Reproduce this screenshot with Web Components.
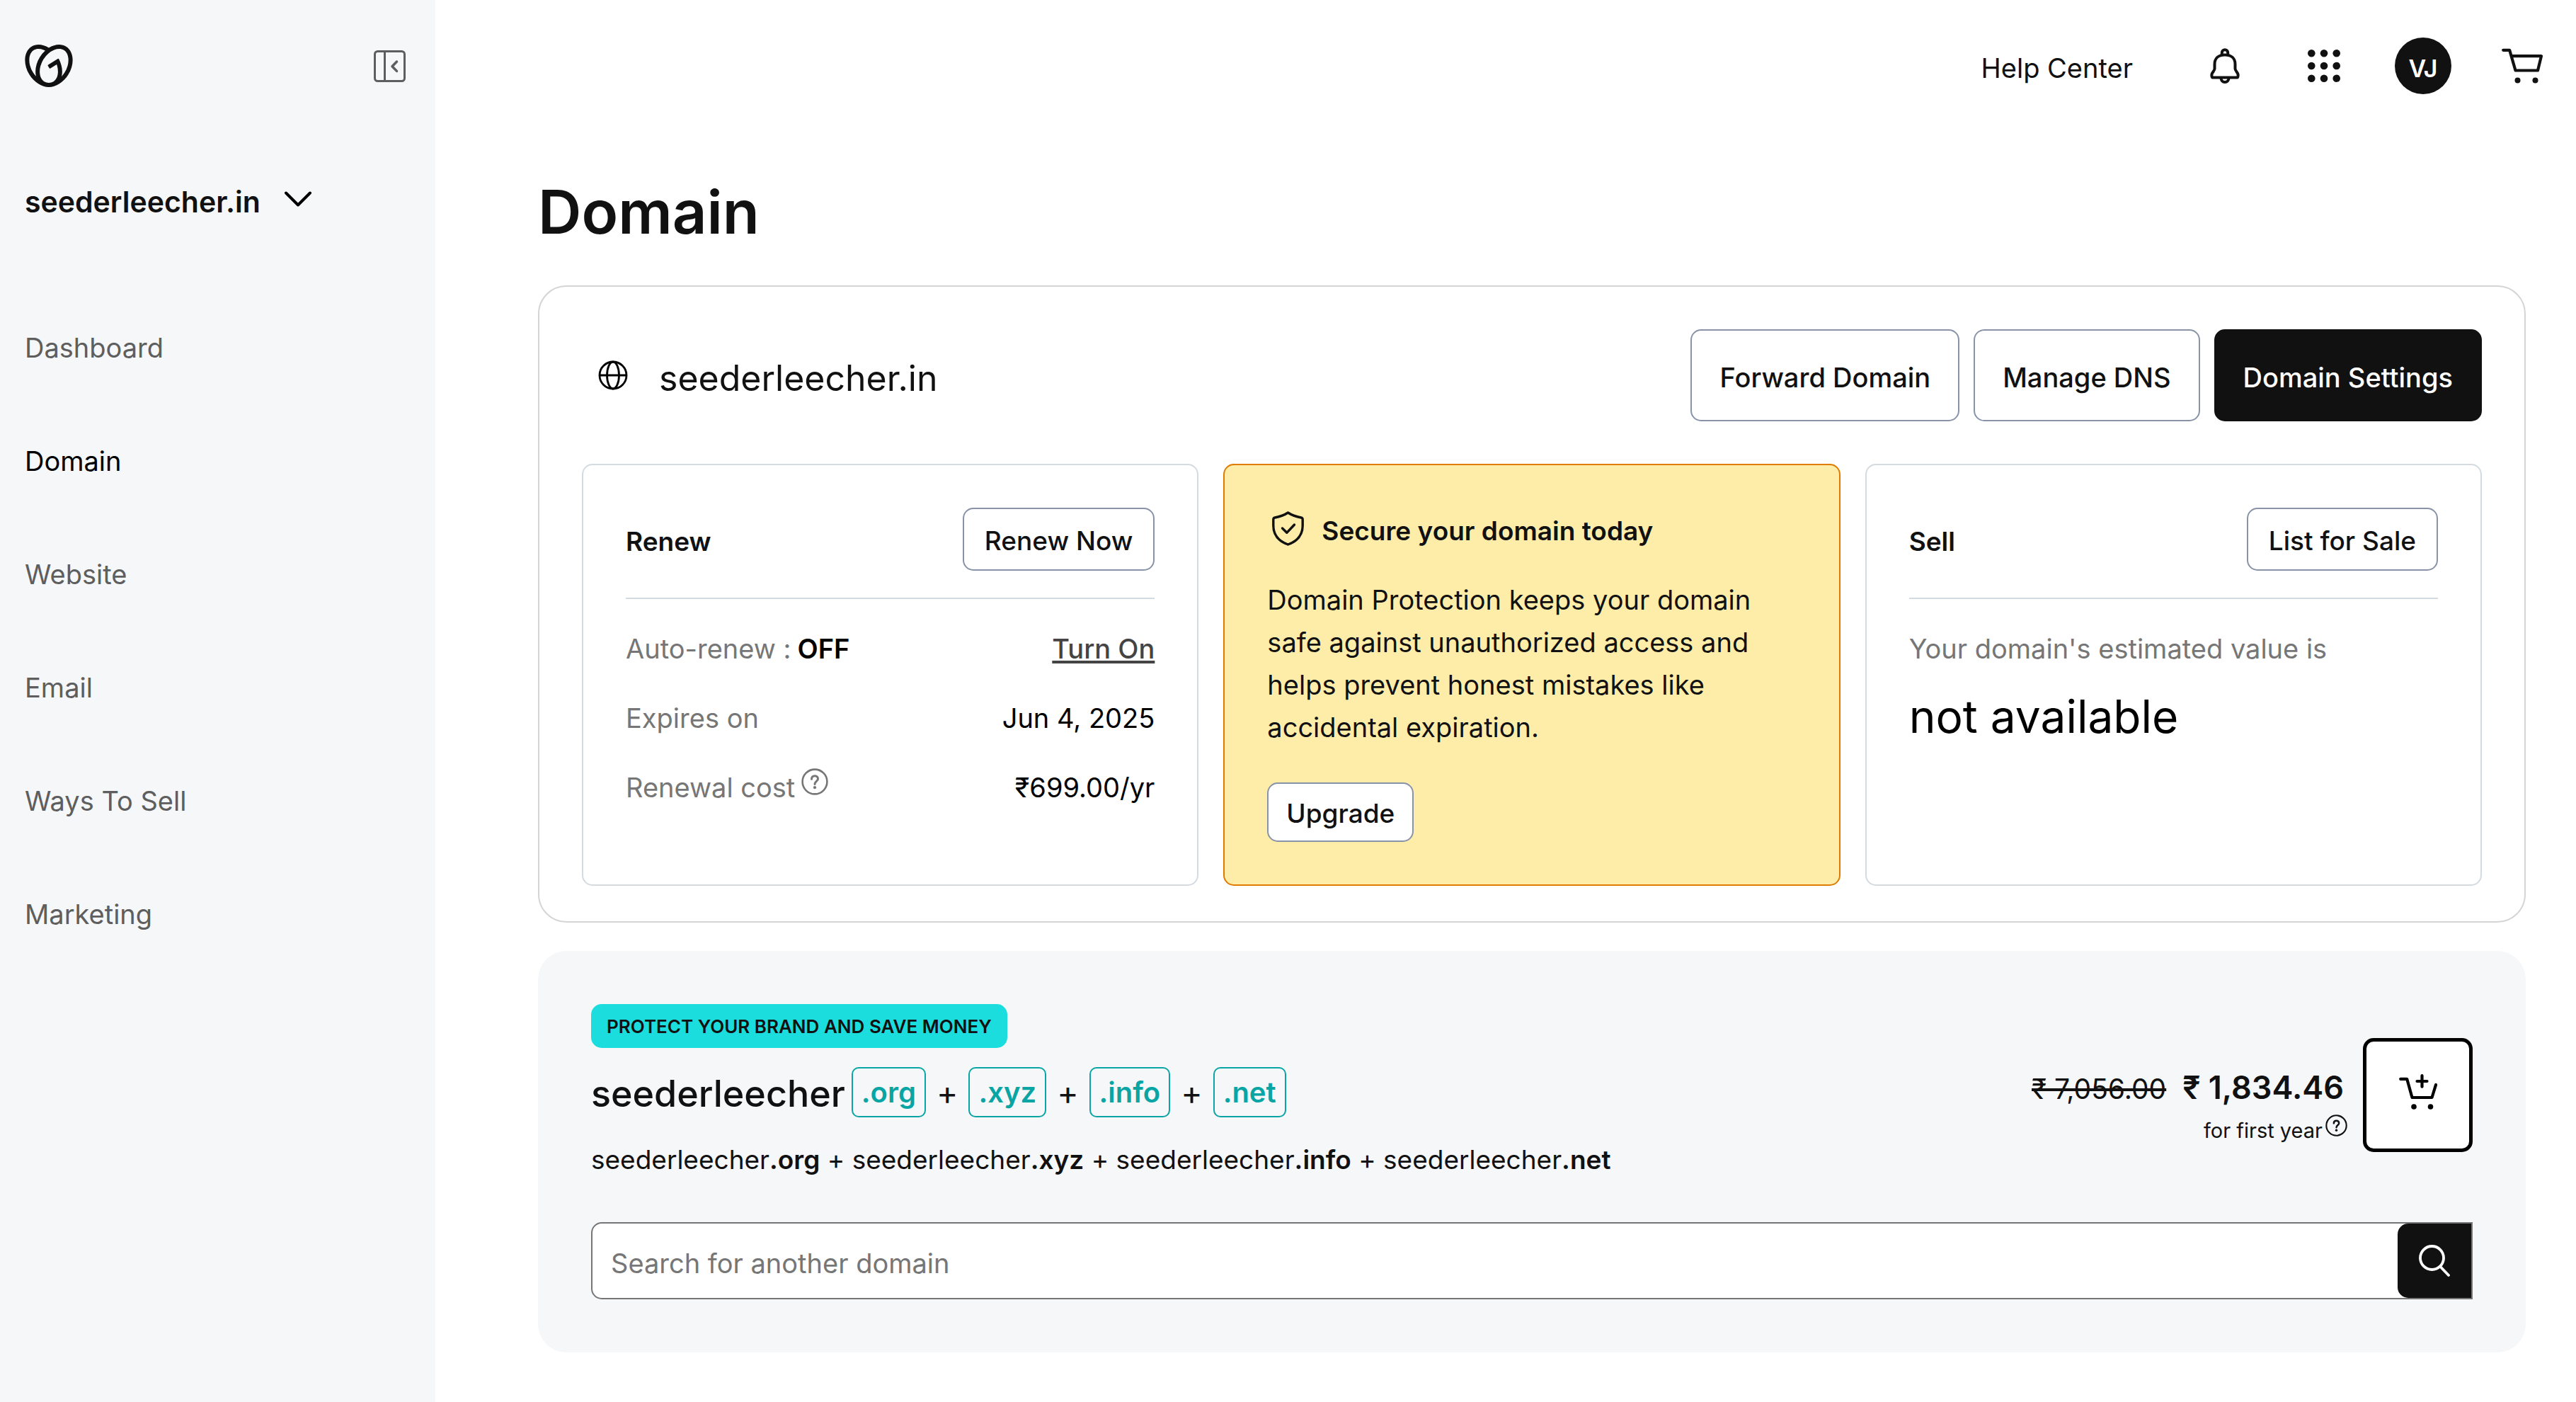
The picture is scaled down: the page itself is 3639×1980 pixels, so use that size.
<!DOCTYPE html>
<html lang="en">
<head>
<meta charset="utf-8">
<meta name="viewport" content="width=device-width, initial-scale=1">
<title>Domain</title>
<style>
  html, body { margin: 0; min-height: 100%; background: #fff; }
  body {
    --ink: #111;
    --muted: #767676;
    --panel: #f5f7f9;
    --line: #d4dbe0;
    --outline: #8893a8;
    --teal: #09a5a5;
    font-family: Inter, "Noto Sans", sans-serif;
    font-size: 38px;
    line-height: 60px;
    color: var(--ink);
  }
</style>
</head>
<body>
<domain-app></domain-app>

<script>
const ICONS = {
  logo: ['0 1.3 24 21.4', '<path fill="currentColor" d="M20.702 2.29c-2.494-1.554-5.778-1.187-8.706.654C9.076 1.104 5.79.736 3.3 2.29c-3.941 2.463-4.42 8.806-1.07 14.167 2.47 3.954 6.333 6.269 9.77 6.226 3.439.043 7.301-2.273 9.771-6.226 3.347-5.361 2.872-11.704-1.069-14.167zM4.042 15.328a12.838 12.838 0 01-1.546-3.541 10.12 10.12 0 01-.336-3.338c.15-1.98.956-3.524 2.27-4.345 1.315-.822 3.052-.87 4.903-.137.281.113.556.24.825.382A15.11 15.11 0 007.5 7.54c-2.035 3.255-2.655 6.878-1.945 9.765a13.247 13.247 0 01-1.514-1.98zm17.465-3.541a12.866 12.866 0 01-1.547 3.54 13.25 13.25 0 01-1.513 1.984c.635-2.589.203-5.76-1.353-8.734a.39.39 0 00-.563-.153l-4.852 3.032a.397.397 0 00-.126.546l.712 1.139a.395.395 0 00.547.126l3.145-1.965c.101.306.203.606.28.916.296 1.086.41 2.214.335 3.337-.15 1.982-.956 3.525-2.27 4.347a4.437 4.437 0 01-2.25.65h-.101a4.432 4.432 0 01-2.25-.65c-1.314-.822-2.121-2.365-2.27-4.347-.074-1.123.039-2.252.335-3.337a13.212 13.212 0 014.05-6.482 10.148 10.148 0 012.849-1.765c1.845-.733 3.586-.685 4.9.137 1.316.822 2.122 2.365 2.271 4.345a10.146 10.146 0 01-.33 3.334z"/>'],
  collapse: ['0 0 45 45', '<g fill="none" stroke="currentColor" stroke-width="3"><rect x="1.5" y="1.5" width="42" height="42" rx="4"/><path d="M15.500 2v41"/><path d="M32.500 16l-6.500 6.700 6.500 6.700" stroke-width="3.500" stroke-linecap="round" stroke-linejoin="round"/></g>'],
  chevron: ['0 0 38 22', '<path d="M2 2.500l17 17 17-17" fill="none" stroke="currentColor" stroke-width="4" stroke-linecap="round" stroke-linejoin="round"/>'],
  bell: ['0 0 42 50', '<g fill="none" stroke="currentColor" stroke-width="4" stroke-linejoin="round"><path d="M6.500 22.500C6.500 14 12.500 9.500 21 9.500S35.500 14 35.500 22.500V29c0 3 3.500 5 4 8 .3 2.300 0 4-.6 4.500H3.100C2.500 41 2.200 39.300 2.500 37c.5-3 4-5 4-8z"/><path d="M16.800 9.500V6.500a4.200 4.200 0 018.400 0v3M15.500 42c0 3.500 2.300 6 5.500 6s5.500-2.500 5.500-6"/></g>'],
  dots: ['0 0 46 46', '<g fill="currentColor"><circle cx="5.300" cy="5.300" r="5.300"/><circle cx="23" cy="5.300" r="5.300"/><circle cx="40.700" cy="5.300" r="5.300"/><circle cx="5.300" cy="23" r="5.300"/><circle cx="23" cy="23" r="5.300"/><circle cx="40.700" cy="23" r="5.300"/><circle cx="5.300" cy="40.700" r="5.300"/><circle cx="23" cy="40.700" r="5.300"/><circle cx="40.700" cy="40.700" r="5.300"/></g>'],
  cart: ['0 0 58 50', '<path d="M2.200 2.800h9l8.300 28.700h31.500l5-20.300H14" transform="translate(0 3)" fill="none" stroke="currentColor" stroke-width="4.200" stroke-linecap="round" stroke-linejoin="round" style="transform:none"/><circle cx="22.500" cy="45.500" r="4"/><circle cx="47.500" cy="45.500" r="4"/>'],
  cartAdd: ['0 0 54 50', '<g fill="none" stroke="currentColor" stroke-width="4.200" stroke-linecap="round" stroke-linejoin="round"><path d="M2.200 6.800h9L18.500 33h28L52 15"/><path d="M32.500 2.200v15.500M25.500 10h14"/></g><circle cx="21" cy="46" r="3.800"/><circle cx="44.500" cy="46" r="3.800"/>'],
  globe: ['0 0 42 42', '<g fill="none" stroke="currentColor" stroke-width="2.800"><circle cx="21" cy="21" r="19"/><ellipse cx="21" cy="21" rx="8.500" ry="19"/><path d="M2 21h38"/></g>'],
  help: ['0 0 38 38', '<g fill="none" stroke="currentColor" stroke-width="2.600"><circle cx="19" cy="19" r="17.400"/><path d="M14.500 15.200c0-2.700 1.900-4.500 4.500-4.500s4.500 1.700 4.500 4.200c0 3.500-4.500 3.600-4.500 7.600" stroke-width="3" stroke-linecap="round"/></g><circle cx="19" cy="27.200" r="2.100"/>'],
  shield: ['0 0 45 49', '<g fill="none" stroke="currentColor" stroke-width="3.400" stroke-linecap="round" stroke-linejoin="round"><path d="M22.500 2c6 4 12 5.800 18.500 7 1.500.3 2.200 1.200 2.200 2.700V20c0 13.500-8 22.500-20.700 27C9.800 42.500 1.800 33.500 1.800 20v-8.300C1.800 10.200 2.500 9.300 4 9c6.500-1.200 12.500-3 18.500-7z"/><path d="M14.500 24l6.300 6.300L31.500 19"/></g>'],
  search: ['0 0 44 45', '<g fill="none" stroke="currentColor" stroke-width="3.800" stroke-linecap="round"><circle cx="18.500" cy="18.500" r="16.500"/><path d="M30.500 31L42 43"/></g>']
};

function define(name, html, setup) {
  const template = document.createElement('template');
  template.innerHTML = html;
  customElements.define(name, class extends HTMLElement {
    constructor() {
      super();
      this.attachShadow({ mode: 'open' }).append(template.content.cloneNode(true));
    }
    connectedCallback() { if (setup) setup(this, this.shadowRoot); }
  });
}

define('ui-icon', `
  <style>
    :host { display: block; flex: none; }
    svg { display: block; width: 100%; height: 100%; fill: currentColor; }
  </style>
  <svg aria-hidden="true"></svg>`,
  (host, root) => {
    const [box, art] = ICONS[host.getAttribute('name')];
    const svg = root.querySelector('svg');
    svg.setAttribute('viewBox', box);
    svg.innerHTML = art;
  });

define('ui-button', `
  <style>
    :host { display: block; flex: none; }
    button {
      display: block; margin: 0; box-sizing: border-box; cursor: pointer;
      font: inherit; font-size: 37px; font-weight: 500; line-height: 60px; white-space: nowrap; color: var(--ink);
      background: #fff; border: 2px solid var(--outline); border-radius: 15px;
      padding: 15px 29px 10px;
    }
    :host([size=large]) button { padding: 36px 39px 30px; font-size: 38px; }
    :host([size=small]) button { padding: 12px 25px 8px; }
    :host([primary]) button { color: #fff; background: #111; border-color: #111; }
  </style>
  <button type="button"><slot></slot></button>`);

define('icon-button', `
  <style>
    :host { display: block; flex: none; }
    button {
      display: flex; align-items: center; justify-content: center;
      width: 80px; height: 80px; margin: 0; padding: 0; border: 0; border-radius: 50%;
      background: none; color: inherit; font: inherit; cursor: pointer;
    }
    :host([filled]) button { background: #111; color: #fff; font-size: 34px; font-weight: 600; padding-top: 8px; }
  </style>
  <button type="button"><slot></slot></button>`,
  (host, root) => root.querySelector('button').setAttribute('aria-label', host.getAttribute('label')));

define('help-tip', `
  <style>
    :host { display: block; flex: none; }
    button { display: block; width: 100%; height: 100%; margin: 0; padding: 0; border: 0; background: none; color: inherit; }
    ui-icon { width: 100%; height: 100%; }
  </style>
  <button type="button" aria-label="More information"><ui-icon name="help"></ui-icon></button>`);

define('nav-item', `
  <style>
    :host { display: block; }
    a { display: block; padding: 50px 0; color: #5e5e5e; text-decoration: none; }
    :host([current]) a { color: #000; }
  </style>
  <a href="#"><slot></slot></a>`);

define('app-sidebar', `
  <style>
    :host { display: block; box-sizing: border-box; padding: 63px 42px 60px 35px; background: var(--panel); }
    .head { display: flex; justify-content: space-between; align-items: center; }
    .head button { margin: 0; padding: 0; border: 0; background: none; color: #5e5e5e; }
    .head a { color: var(--ink); }
    .logo { width: 68px; height: 60px; }
    .collapse { width: 45px; height: 45px; }
    .site {
      display: flex; align-items: center; gap: 34px; margin: 132px 0 96px; padding: 0;
      border: 0; background: none; color: var(--ink);
      font: inherit; font-size: 41px; font-weight: 600; line-height: 60px;
    }
    .chevron { width: 38px; height: 22px; color: #000; padding-bottom: 8px; }
  </style>
  <div class="head">
    <a href="#" aria-label="Home"><ui-icon class="logo" name="logo"></ui-icon></a>
    <button type="button" aria-label="Collapse menu"><ui-icon class="collapse" name="collapse"></ui-icon></button>
  </div>
  <button class="site" type="button"><span>seederleecher.in</span><ui-icon class="chevron" name="chevron"></ui-icon></button>
  <nav><slot></slot></nav>`);

define('app-topbar', `
  <style>
    :host { display: flex; justify-content: flex-end; align-items: center; gap: 60px; padding: 53px 36px 0 0; }
    a { margin-right: 30px; padding-top: 6px; color: var(--ink); text-decoration: none; }
    .bell { width: 42px; height: 50px; }
    .dots { width: 46px; height: 46px; }
    .cart { width: 58px; height: 50px; }
  </style>
  <a href="#">Help Center</a>
  <icon-button label="Notifications"><ui-icon class="bell" name="bell"></ui-icon></icon-button>
  <icon-button label="Apps"><ui-icon class="dots" name="dots"></ui-icon></icon-button>
  <icon-button label="Account" filled>VJ</icon-button>
  <icon-button label="Cart"><ui-icon class="cart" name="cart"></ui-icon></icon-button>`);

define('domain-card', `
  <style>
    :host { display: block; border: 2px solid #d5d5d5; border-radius: 40px; padding: 60px 60px 50px; }
    header { display: flex; align-items: center; gap: 20px; margin-bottom: 60px; padding-left: 23px; }
    .globe { width: 42px; height: 42px; color: #000; }
    h2 { flex: 1; margin: 0; padding: 8px 0 0 24px; font-size: 50px; font-weight: 400; line-height: 60px; }
    .cards { display: grid; grid-template-columns: repeat(3, 1fr); gap: 35px; }
  </style>
  <header>
    <ui-icon class="globe" name="globe"></ui-icon>
    <h2><slot name="name"></slot></h2>
    <slot name="actions"></slot>
  </header>
  <div class="cards"><slot></slot></div>`);

define('info-card', `
  <style>
    :host { display: block; border: 2px solid var(--line); border-radius: 15px; padding: 60px; }
    header { display: flex; align-items: center; justify-content: space-between; padding-bottom: 38px; margin-bottom: 40px; border-bottom: 2px solid var(--line); }
    h3 { margin: 0; padding-top: 6px; font-size: 37px; font-weight: 600; line-height: 60px; }
  </style>
  <header><h3><slot name="title"></slot></h3><slot name="action"></slot></header>
  <slot></slot>`);

define('info-row', `
  <style>
    :host { display: flex; justify-content: space-between; margin-bottom: 38px; }
    .label { display: flex; gap: 9px; color: var(--muted); }
    .value { color: #000; }
    ::slotted(b) { color: #000; font-weight: 600; }
    ::slotted(a) { color: #444; font-weight: 500; text-decoration: underline; text-decoration-thickness: 4px; text-underline-offset: 3px; }
    ::slotted(help-tip) { width: 38px; height: 38px; margin-top: 3px; }
  </style>
  <div class="label"><slot name="label"></slot></div>
  <div class="value"><slot></slot></div>`);

define('notice-card', `
  <style>
    :host { display: block; border: 2px solid #e07b00; border-radius: 15px; padding: 60px; background: #feeda9; }
    h3 { display: flex; align-items: flex-start; gap: 25px; margin: 0 0 34px; padding-left: 7px; font-size: 37px; font-weight: 600; line-height: 66px; }
    .shield { width: 45px; height: 49px; margin-top: 5px; }
    p { margin: 0 0 48px; }
  </style>
  <h3><ui-icon class="shield" name="shield"></ui-icon><slot name="title"></slot></h3>
  <p><slot></slot></p>
  <slot name="action"></slot>`);

define('tld-chip', `
  <style>
    :host {
      display: block; padding: 4px 12px 3px; border: 2px solid var(--teal); border-radius: 10px;
      color: var(--teal); font-size: 40px; font-weight: 600; line-height: 60px;
    }
  </style>
  <slot></slot>`);

define('search-box', `
  <style>
    :host { display: block; }
    form { display: flex; margin: 0; background: #fff; border: 2px solid #767676; border-radius: 15px 0 0 15px; }
    input {
      flex: 1; min-width: 0; margin: 0; padding: 26px 26px 19px; border: 0; outline: 0; background: none;
      font: inherit; line-height: 60px; height: 60px; color: var(--ink);
    }
    input::placeholder { color: #767676; opacity: 1; }
    button {
      display: flex; align-items: center; justify-content: center; width: 104px; margin: 0; padding: 0;
      border: 0; border-radius: 15px 0 0 15px; background: #111; color: #fff;
    }
    ui-icon { width: 44px; height: 45px; }
  </style>
  <form role="search" onsubmit="return false">
    <input type="text" placeholder="Search for another domain" aria-label="Search for another domain">
    <button type="submit" aria-label="Search"><ui-icon name="search"></ui-icon></button>
  </form>`);

define('bundle-offer', `
  <style>
    :host { display: block; padding: 75px; border-radius: 40px; background: var(--panel); }
    .offer { display: flex; justify-content: space-between; margin-bottom: 58px; }
    .summary { display: flex; flex-direction: column; align-items: flex-start; }
    .badge { margin-bottom: 27px; padding: 2px 22px 0; border-radius: 15px; background: #1bdddd; font-size: 26px; font-weight: 600; line-height: 60px; }
    .bundle { display: flex; align-items: center; gap: 15px; margin-bottom: 30px; }
    h2 { margin: 0 -6px 0 0; font-size: 52px; font-weight: 500; line-height: 60px; padding-top: 4px; }
    .plus { font-size: 46px; }
    .detail { font-size: 37px; }
    .detail b { font-weight: 600; }
    .buy { display: flex; align-items: flex-start; gap: 22px; margin-top: 48px; }
    .prices { display: flex; flex-direction: column; align-items: flex-end; gap: 8px; padding-top: 42px; }
    .price { display: flex; align-items: baseline; gap: 23px; padding-right: 5px; line-height: 56px; }
    .price s { font-size: 39px; text-decoration-thickness: 4px; }
    .price strong { font-size: 45px; font-weight: 600; }
    .term { display: flex; align-items: flex-start; gap: 4px; font-size: 29px; line-height: 46px; }
    .term help-tip { width: 31px; height: 31px; }
    .add {
      display: flex; align-items: center; justify-content: center; width: 155px; height: 161px; margin: 0; padding: 0 0 10px;
      border: 5px solid #000; border-radius: 15px; background: #fff; color: #000;
    }
    .add ui-icon { width: 54px; height: 50px; }
  </style>
  <div class="offer">
    <div class="summary">
      <div class="badge">PROTECT YOUR BRAND AND SAVE MONEY</div>
      <div class="bundle">
        <h2>seederleecher</h2>
        <tld-chip>.org</tld-chip><span class="plus">+</span>
        <tld-chip>.xyz</tld-chip><span class="plus">+</span>
        <tld-chip>.info</tld-chip><span class="plus">+</span>
        <tld-chip>.net</tld-chip>
      </div>
      <div class="detail">seederleecher<b>.org</b> + seederleecher<b>.xyz</b> + seederleecher<b>.info</b> + seederleecher<b>.net</b></div>
    </div>
    <div class="buy">
      <div class="prices">
        <div class="price"><s>₹ 7,056.00</s><strong>₹ 1,834.46</strong></div>
        <div class="term">for first year<help-tip></help-tip></div>
      </div>
      <button class="add" type="button" aria-label="Add to cart"><ui-icon name="cartAdd"></ui-icon></button>
    </div>
  </div>
  <search-box></search-box>`);

define('domain-app', `
  <style>
    :host { display: grid; grid-template-columns: 615px 1fr; min-height: 100vh; }
    main { padding: 117px 71px 70px 145px; }
    h1 { margin: 0 0 53px; font-size: 85px; font-weight: 600; line-height: 100px; }
    bundle-offer { margin-top: 40px; }
    .value { margin-top: 26px; font-size: 64px; line-height: 80px; color: #000; }
    .lead { color: var(--muted); }
  </style>
  <app-sidebar>
    <nav-item>Dashboard</nav-item>
    <nav-item current>Domain</nav-item>
    <nav-item>Website</nav-item>
    <nav-item>Email</nav-item>
    <nav-item>Ways To Sell</nav-item>
    <nav-item>Marketing</nav-item>
  </app-sidebar>
  <div>
    <app-topbar></app-topbar>
    <main>
      <h1>Domain</h1>
      <domain-card>
        <span slot="name">seederleecher.in</span>
        <ui-button slot="actions" size="large">Forward Domain</ui-button>
        <ui-button slot="actions" size="large">Manage DNS</ui-button>
        <ui-button slot="actions" size="large" primary>Domain Settings</ui-button>
        <info-card>
          <span slot="title">Renew</span>
          <ui-button slot="action">Renew Now</ui-button>
          <info-row><span slot="label">Auto-renew :</span><b slot="label">OFF</b><a href="#">Turn On</a></info-row>
          <info-row><span slot="label">Expires on</span>Jun 4, 2025</info-row>
          <info-row><span slot="label">Renewal cost</span><help-tip slot="label"></help-tip>₹699.00/yr</info-row>
        </info-card>
        <notice-card>
          <span slot="title">Secure your domain today</span>
          Domain Protection keeps your domain safe against unauthorized access and helps prevent honest mistakes like accidental expiration.
          <ui-button slot="action" size="small">Upgrade</ui-button>
        </notice-card>
        <info-card>
          <span slot="title">Sell</span>
          <ui-button slot="action">List for Sale</ui-button>
          <div class="lead">Your domain's estimated value is</div>
          <div class="value">not available</div>
        </info-card>
      </domain-card>
      <bundle-offer></bundle-offer>
    </main>
  </div>`);
</script>
</body>
</html>
